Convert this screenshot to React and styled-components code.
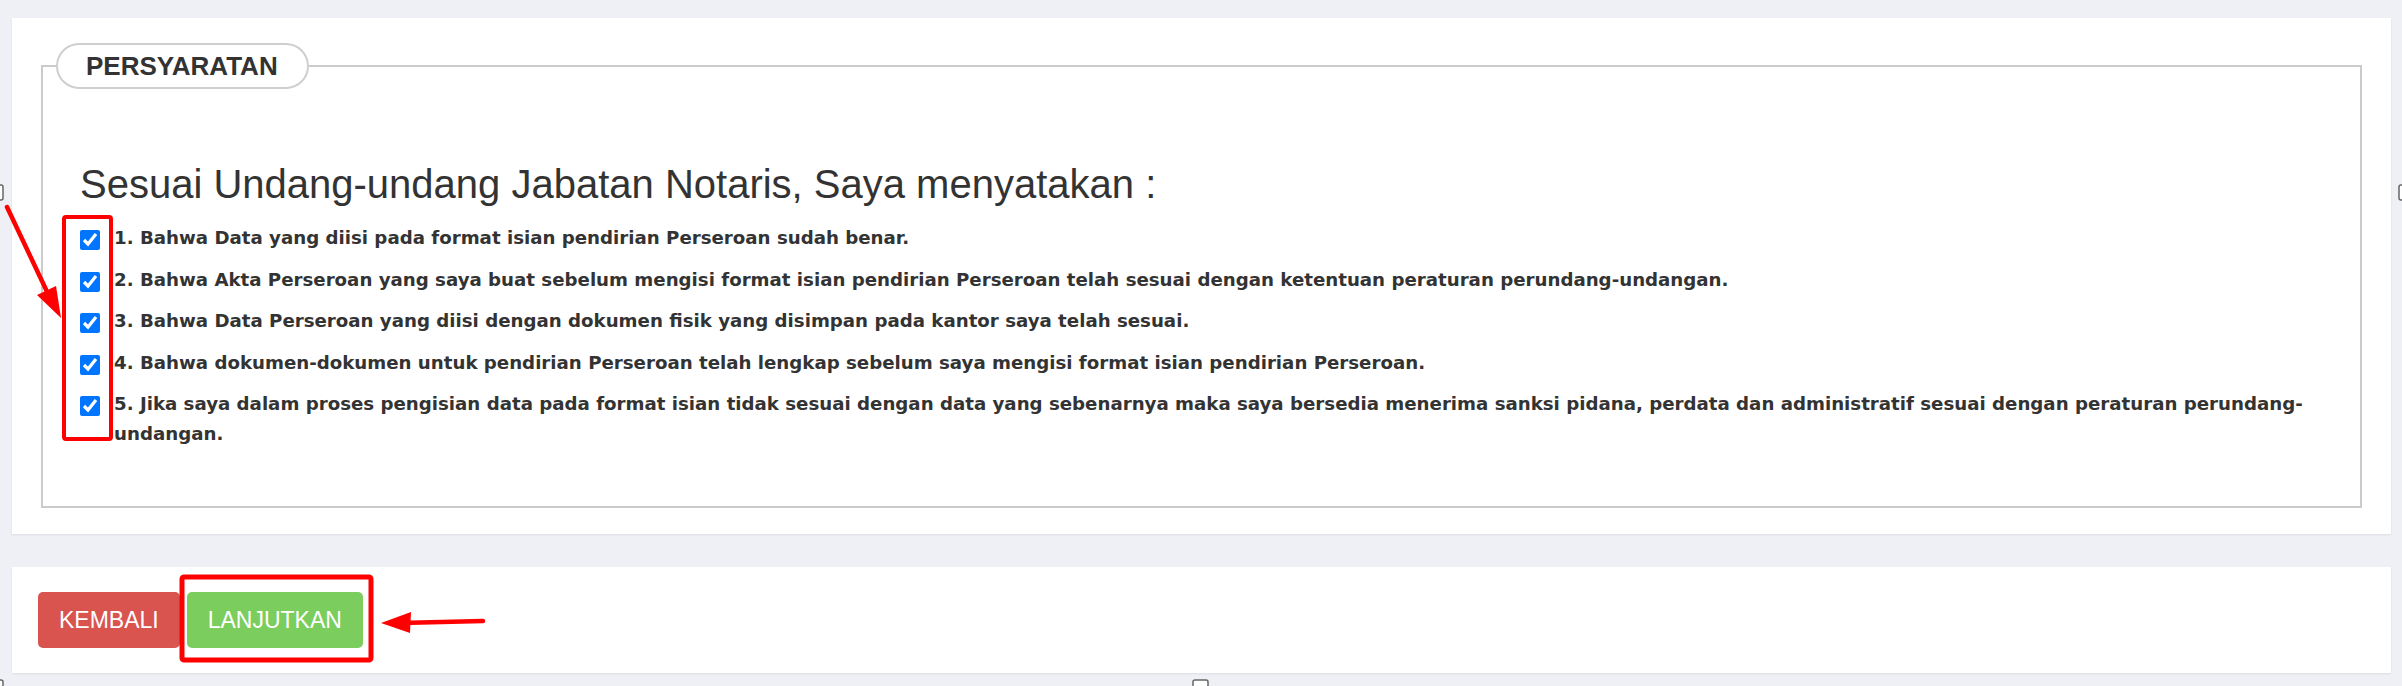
import React, { useState } from 'react';
import styled, { createGlobalStyle } from 'styled-components';

const GlobalStyle = createGlobalStyle`
  html, body {
    margin: 0;
    padding: 0;
    background: #eff0f5;
  }
  body {
    font-family: "Liberation Sans", Arial, sans-serif;
    color: #333;
  }
`;

const Page = styled.div`
  position: relative;
  min-height: 686px;
  padding: 18px 11px 0 12px;
  box-sizing: border-box;
  overflow: hidden;
`;

const Panel = styled.div`
  background: #fff;
  box-shadow: 0 1px 2px rgba(0, 0, 0, 0.08);
  padding: ${(p) => p.$pad};
  margin-bottom: ${(p) => p.$gap || '0'};
`;

const Fieldset = styled.fieldset`
  margin: 0;
  padding: 0;
  min-width: 0;
  border: 2px solid #cbcbcb;
`;

const Legend = styled.legend`
  margin-left: 13px;
  padding: 0 29px 0 28px;
  border: 2px solid #cfcfcf;
  border-radius: 24px;
  font-family: "Liberation Sans", Arial, sans-serif;
  font-weight: 700;
  font-size: 26px;
  line-height: 42px;
  color: #333;
`;

const Body = styled.div`
  padding: 73px 28px 57px 37px;
`;

const Heading = styled.h2`
  margin: 0 0 17px;
  font-family: "Liberation Sans", Arial, sans-serif;
  font-weight: 400;
  font-size: 40px;
  line-height: 44px;
  color: #333;
`;

const List = styled.div`
  display: flex;
  flex-direction: column;
  gap: 11.5px;
`;

const Item = styled.label`
  display: flex;
  align-items: flex-start;
  font-family: "DejaVu Sans", Verdana, sans-serif;
  font-weight: 700;
  font-size: 18.2px;
  line-height: 30px;
  color: #333;
`;

const Check = styled.input`
  flex: none;
  width: 20px;
  height: 20px;
  margin: 7px 14px 0 0;
`;

const Actions = styled.div`
  display: flex;
  gap: 7px;
`;

const Button = styled.button`
  height: 56px;
  padding: 0 21px;
  border: none;
  border-radius: 5px;
  background: ${(p) => p.$bg};
  color: #fff;
  font-family: "Liberation Sans", Arial, sans-serif;
  font-size: 23px;
  cursor: pointer;
`;

const Overlay = styled.svg`
  position: absolute;
  top: 0;
  left: 0;
  pointer-events: none;
`;

const items = [
  '1. Bahwa Data yang diisi pada format isian pendirian Perseroan sudah benar.',
  '2. Bahwa Akta Perseroan yang saya buat sebelum mengisi format isian pendirian Perseroan telah sesuai dengan ketentuan peraturan perundang-undangan.',
  '3. Bahwa Data Perseroan yang diisi dengan dokumen fisik yang disimpan pada kantor saya telah sesuai.',
  '4. Bahwa dokumen-dokumen untuk pendirian Perseroan telah lengkap sebelum saya mengisi format isian pendirian Perseroan.',
  '5. Jika saya dalam proses pengisian data pada format isian tidak sesuai dengan data yang sebenarnya maka saya bersedia menerima sanksi pidana, perdata dan administratif sesuai dengan peraturan perundang-undangan.',
];

const App = () => {
  const [checked, setChecked] = useState(items.map(() => true));

  const toggle = (i) => {
    setChecked((prev) => prev.map((v, j) => (j === i ? !v : v)));
  };

  return (
    <Page>
      <GlobalStyle />
      <Panel $pad="25px 29px 26px 29px" $gap="33px">
        <Fieldset>
          <Legend>PERSYARATAN</Legend>
          <Body>
            <Heading>Sesuai Undang-undang Jabatan Notaris, Saya menyatakan :</Heading>
            <List>
              {items.map((text, i) => (
                <Item key={i}>
                  <Check type="checkbox" checked={checked[i]} onChange={() => toggle(i)} />
                  <span>{text}</span>
                </Item>
              ))}
            </List>
          </Body>
        </Fieldset>
      </Panel>
      <Panel $pad="25px 26px">
        <Actions>
          <Button $bg="#d9534f">KEMBALI</Button>
          <Button $bg="#7bcd5d">LANJUTKAN</Button>
        </Actions>
      </Panel>

      {/* annotation marks drawn over the screenshot */}
      <Overlay width="2402" height="686" viewBox="0 0 2402 686">
        <rect x="64" y="217" width="47" height="222" rx="2" fill="none" stroke="#ff0000" strokeWidth="4" />
        <line x1="7" y1="207" x2="50" y2="298" stroke="#ff0000" strokeWidth="4.5" strokeLinecap="round" />
        <polygon points="61,318 37,295 56,286" fill="#ff0000" />
        <rect x="182" y="577" width="189" height="83" rx="2" fill="none" stroke="#ff0000" strokeWidth="5" />
        <line x1="483" y1="621" x2="400" y2="623" stroke="#ff0000" strokeWidth="4.5" strokeLinecap="round" />
        <polygon points="381,623 411,612 410,633" fill="#ff0000" />
        <g fill="#fff" stroke="#666" strokeWidth="1.5">
          <rect x="-12" y="185" width="15" height="15" rx="2" />
          <rect x="2399" y="185" width="15" height="15" rx="2" />
          <rect x="1193" y="680" width="15" height="15" rx="2" />
          <rect x="-12" y="680" width="15" height="15" rx="2" />
        </g>
      </Overlay>
    </Page>
  );
};

export default App;
